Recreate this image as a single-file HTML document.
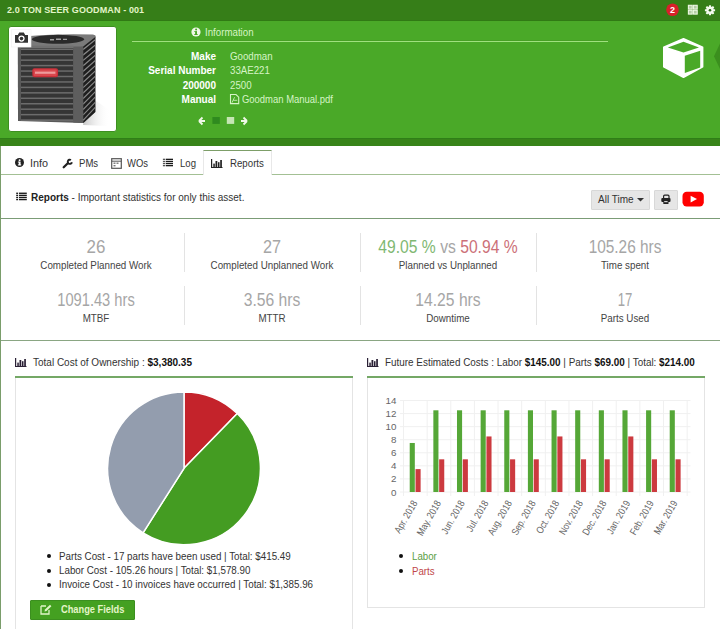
<!DOCTYPE html>
<html><head><meta charset="utf-8">
<style>
*{margin:0;padding:0;box-sizing:border-box}
html,body{width:720px;height:629px;overflow:hidden;background:#fff}
body{position:relative;font-family:"Liberation Sans", sans-serif;color:#333}
.a{position:absolute;white-space:nowrap}
svg.a{overflow:visible}
</style></head><body>
<div class="a" style="left:0px;top:0px;width:720px;height:21px;background:#367e18"></div>
<div class="a" style="left:0px;top:20px;width:720px;height:1px;background:#307a14"></div>
<div class="a" style="left:0px;top:21px;width:720px;height:117px;background:#4aa928"></div>
<div class="a" style="left:0px;top:138px;width:720px;height:8px;background:#388419"></div>
<div class="a" style="left:0px;top:138px;width:720px;height:1px;background:#2f7f18"></div>
<div class="a" style="left:0px;top:146px;width:1px;height:483px;background:#7a9d6b"></div>
<div class="a" style="left:7px;top:6.35px;font-size:9px;color:#e4f5c8;font-weight:bold;line-height:1;letter-spacing:0.11px">2.0 TON SEER GOODMAN - 001</div>
<svg class="a" style="left:660px;top:0px" width="60" height="21" viewBox="0 0 60 21">
  <circle cx="12.5" cy="9.8" r="6.3" fill="#d8202a"/>
  <text x="12.5" y="13.2" font-family="Liberation Sans" font-size="9" font-weight="bold" fill="#fff" text-anchor="middle">2</text>
<g fill="#b5cca5" stroke="#eef8e4" stroke-width="1.1"><rect x="28.4" y="5.3" width="3.8" height="3.8"/><rect x="33.4" y="5.3" width="3.8" height="3.8"/><rect x="28.4" y="10.3" width="3.8" height="3.8"/><rect x="33.4" y="10.3" width="3.8" height="3.8"/></g>
<g transform="translate(50,10.25)" fill="#f4fbee"><circle cx="0" cy="0" r="3.7"/><rect x="-1.05" y="-5.1" width="2.1" height="2.6" rx="0.4" transform="rotate(0)"/><rect x="-1.05" y="-5.1" width="2.1" height="2.6" rx="0.4" transform="rotate(45)"/><rect x="-1.05" y="-5.1" width="2.1" height="2.6" rx="0.4" transform="rotate(90)"/><rect x="-1.05" y="-5.1" width="2.1" height="2.6" rx="0.4" transform="rotate(135)"/><rect x="-1.05" y="-5.1" width="2.1" height="2.6" rx="0.4" transform="rotate(180)"/><rect x="-1.05" y="-5.1" width="2.1" height="2.6" rx="0.4" transform="rotate(225)"/><rect x="-1.05" y="-5.1" width="2.1" height="2.6" rx="0.4" transform="rotate(270)"/><rect x="-1.05" y="-5.1" width="2.1" height="2.6" rx="0.4" transform="rotate(315)"/><circle cx="0" cy="0" r="1.3" fill="#2e6a18"/></g></svg>
<div class="a" style="left:8px;top:26px;width:109px;height:106px;background:#fff;border:1px solid #3d8f20;border-radius:3px;overflow:hidden"><svg width="107" height="104" viewBox="1 1 107 104" style="position:absolute;left:0;top:0">
<defs><linearGradient id="sh" x1="0" y1="0" x2="1" y2="0"><stop offset="0" stop-color="#999" stop-opacity="0.55"/><stop offset="1" stop-color="#fff" stop-opacity="0"/></linearGradient></defs>
<path d="M80,70 L102,84 L100,100 L75,99 Z" fill="url(#sh)"/>
<path d="M9.8,21 L22,10.5 L87.3,9.5 L87.3,86 L75.3,97 L10,95 Z" fill="#5a5a5a"/>
<path d="M10,22 L22,10 Q50,7.5 85,8.5 Q88,9 87.5,11.5 L76,20.5 L65.3,22 Z" fill="#7a7a7a"/><rect x="10" y="19.6" width="55.3" height="2.6" fill="#707070"/>
<ellipse cx="50" cy="13.3" rx="26" ry="4.5" fill="#2a2a2a"/>
<path d="M42,13 h4 v1.4 h-4 z M48,12.4 h5 v1.6 h-5 z M55,12.8 h4 v1.3 h-4 z" fill="#a0a0a0"/>
<rect x="13" y="22" width="52.3" height="72" fill="#353535"/>
<rect x="13" y="22.50" width="52.3" height="1.5" fill="#6c6c6c"/><rect x="13" y="27.95" width="52.3" height="1.5" fill="#6c6c6c"/><rect x="13" y="33.40" width="52.3" height="1.5" fill="#6c6c6c"/><rect x="13" y="38.85" width="52.3" height="1.5" fill="#6c6c6c"/><rect x="13" y="44.30" width="52.3" height="1.5" fill="#6c6c6c"/><rect x="13" y="49.75" width="52.3" height="1.5" fill="#6c6c6c"/><rect x="13" y="55.20" width="52.3" height="1.5" fill="#6c6c6c"/><rect x="13" y="60.65" width="52.3" height="1.5" fill="#6c6c6c"/><rect x="13" y="66.10" width="52.3" height="1.5" fill="#6c6c6c"/><rect x="13" y="71.55" width="52.3" height="1.5" fill="#6c6c6c"/><rect x="13" y="77.00" width="52.3" height="1.5" fill="#6c6c6c"/><rect x="13" y="82.45" width="52.3" height="1.5" fill="#6c6c6c"/><rect x="13" y="87.90" width="52.3" height="1.5" fill="#6c6c6c"/><rect x="13" y="93.35" width="52.3" height="1.5" fill="#6c6c6c"/>
<path d="M65.3,20.5 L75.3,20.5 L75.3,97 L65.3,96.5 Z" fill="#5e5e5e"/>
<path d="M75.3,20.5 L87.3,11 L87.3,86 L75.3,97 Z" fill="#1e1e1e"/>
<path d="M75.3,22.50 L87.3,13.00 L87.3,14.50 L75.3,24.20 Z" fill="#8a8a8a"/><path d="M75.3,27.95 L87.3,18.20 L87.3,19.70 L75.3,29.65 Z" fill="#8a8a8a"/><path d="M75.3,33.40 L87.3,23.40 L87.3,24.90 L75.3,35.10 Z" fill="#8a8a8a"/><path d="M75.3,38.85 L87.3,28.60 L87.3,30.10 L75.3,40.55 Z" fill="#8a8a8a"/><path d="M75.3,44.30 L87.3,33.80 L87.3,35.30 L75.3,46.00 Z" fill="#8a8a8a"/><path d="M75.3,49.75 L87.3,39.00 L87.3,40.50 L75.3,51.45 Z" fill="#8a8a8a"/><path d="M75.3,55.20 L87.3,44.20 L87.3,45.70 L75.3,56.90 Z" fill="#8a8a8a"/><path d="M75.3,60.65 L87.3,49.40 L87.3,50.90 L75.3,62.35 Z" fill="#8a8a8a"/><path d="M75.3,66.10 L87.3,54.60 L87.3,56.10 L75.3,67.80 Z" fill="#8a8a8a"/><path d="M75.3,71.55 L87.3,59.80 L87.3,61.30 L75.3,73.25 Z" fill="#8a8a8a"/><path d="M75.3,77.00 L87.3,65.00 L87.3,66.50 L75.3,78.70 Z" fill="#8a8a8a"/><path d="M75.3,82.45 L87.3,70.20 L87.3,71.70 L75.3,84.15 Z" fill="#8a8a8a"/><path d="M75.3,87.90 L87.3,75.40 L87.3,76.90 L75.3,89.60 Z" fill="#8a8a8a"/><path d="M75.3,93.35 L87.3,80.60 L87.3,82.10 L75.3,95.05 Z" fill="#8a8a8a"/>
<rect x="24.3" y="42.2" width="25.8" height="9.1" rx="2.2" fill="#c8303a"/>
<rect x="25.6" y="43.5" width="23.2" height="6.5" rx="1.2" fill="#d9474d"/>
<rect x="27" y="45.6" width="20.4" height="2.2" fill="#f3b0b0" opacity="0.8"/>
<rect x="3.4" y="3.7" width="19.6" height="17.3" fill="#fff" stroke="#f0f0f0" stroke-width="0.6"/>
<path d="M7,9 h2.8 l1.4,-2.6 h4.6 l1.4,2.6 h2.8 v7.7 h-13 z" fill="#333"/>
<circle cx="13.5" cy="12.6" r="3.1" fill="#fff"/><circle cx="13.5" cy="12.6" r="1.8" fill="#333"/>
</svg></div>
<svg class="a" style="left:191px;top:27.4px" width="10" height="10" viewBox="0 0 10 10"><circle cx="5" cy="5" r="4.6" fill="#f0f8e8"/><rect x="4.1" y="4.1" width="1.9" height="3.7" fill="#4aa928"/><rect x="3.3" y="7" width="3.4" height="1" fill="#4aa928"/><rect x="3.3" y="4.1" width="1.2" height="0.9" fill="#4aa928"/><circle cx="5.1" cy="2.6" r="1.0" fill="#4aa928"/></svg>
<div class="a" style="left:205px;top:27.60px;font-size:10px;color:#d6f4c6;font-weight:normal;line-height:1;transform:scaleX(0.97);transform-origin:left top;">Information</div>
<div class="a" style="left:132px;top:40px;width:476px;height:1px;background:#47a025"></div>
<div class="a" style="left:132px;top:41px;width:476px;height:1px;background:#9fe07f"></div>
<div class="a" style="left:-384px;width:600px;text-align:right;top:51.80px;font-size:10px;color:#fff;font-weight:bold;line-height:1;">Make</div>
<div class="a" style="left:230px;top:51.80px;font-size:10px;color:#d6f4c6;font-weight:normal;line-height:1;transform:scaleX(0.97);transform-origin:left top;">Goodman</div>
<div class="a" style="left:-384px;width:600px;text-align:right;top:66.20px;font-size:10px;color:#fff;font-weight:bold;line-height:1;">Serial Number</div>
<div class="a" style="left:230px;top:66.20px;font-size:10px;color:#d6f4c6;font-weight:normal;line-height:1;transform:scaleX(0.97);transform-origin:left top;">33AE221</div>
<div class="a" style="left:-384px;width:600px;text-align:right;top:80.50px;font-size:10px;color:#fff;font-weight:bold;line-height:1;">200000</div>
<div class="a" style="left:230px;top:80.50px;font-size:10px;color:#d6f4c6;font-weight:normal;line-height:1;transform:scaleX(0.97);transform-origin:left top;">2500</div>
<div class="a" style="left:-384px;width:600px;text-align:right;top:94.90px;font-size:10px;color:#fff;font-weight:bold;line-height:1;">Manual</div>
<svg class="a" style="left:226px;top:92px" width="16" height="14" viewBox="226 92 16 14"><path d="M230.5,94.5 H236 L238.7,97.2 V103.6 H230.5 Z" fill="none" stroke="#d6f4c6" stroke-width="1.1"/><path d="M232,102.6 L234.6,97.2 M233.3,100.3 H237.2" stroke="#d6f4c6" stroke-width="0.8" fill="none"/></svg>
<div class="a" style="left:242px;top:94.90px;font-size:10px;color:#d6f4c6;font-weight:normal;line-height:1;transform:scaleX(0.945);transform-origin:left top;">Goodman Manual.pdf</div>
<svg class="a" style="left:197px;top:115px" width="54" height="12" viewBox="0 0 54 12"><path d="M2,6 L5.5,2.5 M2,6 L5.5,9.5 M2,6 H8" stroke="#f0f8e8" stroke-width="1.8" fill="none"/><rect x="15.4" y="2" width="7.4" height="6.9" fill="#2f8a1f"/><rect x="29.8" y="2" width="7.4" height="6.9" fill="#c6e6b4"/><path d="M50,6 L46.5,2.5 M50,6 L46.5,9.5 M50,6 H44" stroke="#f0f8e8" stroke-width="1.8" fill="none"/></svg>
<svg class="a" style="left:660px;top:35px" width="48" height="46" viewBox="660 35 48 46"><path d="M683.5,38.8 L702.6,47.3 L702.6,66.8 L683.5,77.2 L663.8,66.8 L663.8,47.3 Z" fill="#fff" stroke="#fff" stroke-width="1.6" stroke-linejoin="round"/><path d="M683.5,41.8 L667.8,47.4 L683.5,52.6 L699,47.4 Z M684.8,55.8 L700.2,50.8 L700.2,67.6 L684.8,72.9 Z" fill="#4aa928"/></svg>
<svg class="a" style="left:712px;top:42px" width="8" height="28" viewBox="712 42 8 28"><path d="M720,43.5 L714,56.3 L720,69 Z" fill="#3b8f1e"/></svg>
<div class="a" style="left:1px;top:174px;width:719px;height:1px;background:#a3c094"></div>
<div class="a" style="left:203px;top:150px;width:69px;height:25px;background:#fff;border:1px solid #ddd;border-left-color:#e8e8e8;border-right-color:#e8e8e8;border-top:1px solid #7d9e68;border-bottom:none"></div>
<svg class="a" style="left:15px;top:158.2px" width="9" height="9" viewBox="0 0 9 9"><circle cx="4.5" cy="4.5" r="4.5" fill="#222"/><rect x="3.7" y="3.6" width="1.9" height="3.6" fill="#fff"/><rect x="2.9" y="6.4" width="3.3" height="1" fill="#fff"/><rect x="2.9" y="3.6" width="1.2" height="0.9" fill="#fff"/><circle cx="4.6" cy="2.2" r="1.0" fill="#fff"/></svg>
<div class="a" style="left:30px;top:158.05px;font-size:11px;color:#333;font-weight:normal;line-height:1;transform:scaleX(0.98);transform-origin:left top;">Info</div>
<svg class="a" style="left:58px;top:154px" width="20" height="18" viewBox="58 154 20 18"><line x1="63.7" y1="167.3" x2="67.8" y2="163.2" stroke="#222" stroke-width="2.3" stroke-linecap="round"/><path d="M71.9,162.3 A2.1,2.1 0 1,1 70.95,160.0" stroke="#222" stroke-width="1.9" fill="none"/></svg>
<div class="a" style="left:79px;top:158.05px;font-size:11px;color:#333;font-weight:normal;line-height:1;transform:scaleX(0.87);transform-origin:left top;">PMs</div>
<svg class="a" style="left:111px;top:158px" width="11" height="11" viewBox="0 0 11 11"><rect x="0.7" y="0.7" width="9.6" height="9.6" fill="none" stroke="#555" stroke-width="1.2"/><line x1="0.7" y1="3.2" x2="10.3" y2="3.2" stroke="#555" stroke-width="1"/><rect x="2.5" y="4.5" width="2" height="1.4" fill="#777"/><rect x="5.5" y="4.5" width="2" height="1.4" fill="#777"/><rect x="2.5" y="7" width="2" height="1.4" fill="#777"/></svg>
<div class="a" style="left:127px;top:158.05px;font-size:11px;color:#333;font-weight:normal;line-height:1;transform:scaleX(0.86);transform-origin:left top;">WOs</div>
<svg class="a" style="left:158px;top:154px" width="20" height="18" viewBox="158 154 20 18"><rect x="162.9" y="158.70" width="2.5" height="1.3" fill="#555"/><rect x="166" y="158.70" width="7" height="1.3" fill="#1a1a1a"/><rect x="162.9" y="160.80" width="2.5" height="1.3" fill="#555"/><rect x="166" y="160.80" width="7" height="1.3" fill="#1a1a1a"/><rect x="162.9" y="162.90" width="2.5" height="1.3" fill="#555"/><rect x="166" y="162.90" width="7" height="1.3" fill="#1a1a1a"/><rect x="162.9" y="165.00" width="2.5" height="1.3" fill="#555"/><rect x="166" y="165.00" width="7" height="1.3" fill="#1a1a1a"/></svg>
<div class="a" style="left:180px;top:158.05px;font-size:11px;color:#333;font-weight:normal;line-height:1;transform:scaleX(0.87);transform-origin:left top;">Log</div>
<svg class="a" style="left:211px;top:159px" width="12" height="9" viewBox="0 0 12 9"><g fill="#222"><rect x="0" y="0" width="1.2" height="9"/><rect x="0" y="8" width="11.5" height="1"/><rect x="2.3" y="4.6" width="1.5" height="3.4"/><rect x="4.5" y="2" width="1.8" height="6"/><rect x="7" y="3.2" width="1.5" height="4.8"/><rect x="9.2" y="1" width="1.7" height="7"/></g></svg>
<div class="a" style="left:230px;top:158.05px;font-size:11px;color:#333;font-weight:normal;line-height:1;transform:scaleX(0.88);transform-origin:left top;">Reports</div>
<svg class="a" style="left:12px;top:186px" width="20" height="20" viewBox="12 186 20 20"><g fill="#1a1a1a"><rect x="16.2" y="192.60" width="1.9" height="1.35"/><rect x="19" y="192.60" width="7.8" height="1.35"/><rect x="16.2" y="194.70" width="1.9" height="1.35"/><rect x="19" y="194.70" width="7.8" height="1.35"/><rect x="16.2" y="196.80" width="1.9" height="1.35"/><rect x="19" y="196.80" width="7.8" height="1.35"/><rect x="16.2" y="198.90" width="1.9" height="1.35"/><rect x="19" y="198.90" width="7.8" height="1.35"/></g></svg>
<div class="a" style="left:31px;top:193.00px;font-size:10px;color:#333;font-weight:normal;line-height:1;"><b style="color:#222">Reports</b> - Important statistics for only this asset.</div>
<div class="a" style="left:591px;top:190px;width:59px;height:20px;background:#e6e6e6;border:1px solid #d8d8d8;border-radius:1px"></div>
<div class="a" style="left:598px;top:194.80px;font-size:10px;color:#333;font-weight:normal;line-height:1;">All Time</div>
<svg class="a" style="left:637px;top:198px" width="7" height="4" viewBox="0 0 7 4"><path d="M0,0 L7,0 L3.5,3.6 Z" fill="#333"/></svg>
<div class="a" style="left:654px;top:190px;width:24px;height:20px;background:#e6e6e6;border:1px solid #d8d8d8;border-radius:1px"></div>
<svg class="a" style="left:650px;top:186px" width="60" height="26" viewBox="650 186 60 26"><path d="M663.6,198 v-1.8 q0,-1 1,-1 h3.4 q1,0 1,1 v1.8" stroke="#222" stroke-width="1.2" fill="none"/><rect x="661.3" y="198" width="9.2" height="4" rx="1" fill="#222"/><rect x="663.3" y="200.4" width="5.2" height="3.5" rx="0.5" fill="#222"/><rect x="664.2" y="201.1" width="3.4" height="1.1" fill="#e6e6e6"/></svg>
<svg class="a" style="left:680px;top:190px" width="26" height="18" viewBox="680 190 26 18"><rect x="682.5" y="191.8" width="21.3" height="14.6" rx="4.2" fill="#f00"/><path d="M690.6,195.8 L697,199.1 L690.6,202.4 Z" fill="#fff"/></svg>
<div class="a" style="left:1px;top:218px;width:719px;height:1px;background:#7b9c76"></div>
<div class="a" style="left:184px;top:233px;width:1px;height:39px;background:#e3e3e3"></div>
<div class="a" style="left:184px;top:286px;width:1px;height:39px;background:#e3e3e3"></div>
<div class="a" style="left:360px;top:233px;width:1px;height:39px;background:#e3e3e3"></div>
<div class="a" style="left:360px;top:286px;width:1px;height:39px;background:#e3e3e3"></div>
<div class="a" style="left:536px;top:233px;width:1px;height:39px;background:#e3e3e3"></div>
<div class="a" style="left:536px;top:286px;width:1px;height:39px;background:#e3e3e3"></div>
<div class="a" style="left:-204.2px;width:600px;text-align:center;top:237.80px;font-size:18px;color:#a6a6a6;font-weight:normal;line-height:1;transform:scaleX(0.94);transform-origin:center top;">26</div>
<div class="a" style="left:-204.2px;width:600px;text-align:center;top:259.55px;font-size:11px;color:#444;font-weight:normal;line-height:1;transform:scaleX(0.89);transform-origin:center top;">Completed Planned Work</div>
<div class="a" style="left:-28px;width:600px;text-align:center;top:237.80px;font-size:18px;color:#a6a6a6;font-weight:normal;line-height:1;transform:scaleX(0.9);transform-origin:center top;">27</div>
<div class="a" style="left:-28px;width:600px;text-align:center;top:259.55px;font-size:11px;color:#444;font-weight:normal;line-height:1;transform:scaleX(0.89);transform-origin:center top;">Completed Unplanned Work</div>
<div class="a" style="left:147.8px;width:600px;text-align:center;top:237.80px;font-size:18px;color:#a6a6a6;font-weight:normal;line-height:1;transform:scaleX(0.87);transform-origin:center top;"><span style="color:#80b872">49.05 %</span> vs <span style="color:#cc7078">50.94 %</span></div>
<div class="a" style="left:147.8px;width:600px;text-align:center;top:259.55px;font-size:11px;color:#444;font-weight:normal;line-height:1;transform:scaleX(0.89);transform-origin:center top;">Planned vs Unplanned</div>
<div class="a" style="left:324.6px;width:600px;text-align:center;top:237.80px;font-size:18px;color:#a6a6a6;font-weight:normal;line-height:1;transform:scaleX(0.855);transform-origin:center top;">105.26 hrs</div>
<div class="a" style="left:324.6px;width:600px;text-align:center;top:259.55px;font-size:11px;color:#444;font-weight:normal;line-height:1;transform:scaleX(0.89);transform-origin:center top;">Time spent</div>
<div class="a" style="left:-204.2px;width:600px;text-align:center;top:291.00px;font-size:18px;color:#a6a6a6;font-weight:normal;line-height:1;transform:scaleX(0.815);transform-origin:center top;">1091.43 hrs</div>
<div class="a" style="left:-204.2px;width:600px;text-align:center;top:312.75px;font-size:11px;color:#444;font-weight:normal;line-height:1;transform:scaleX(0.89);transform-origin:center top;">MTBF</div>
<div class="a" style="left:-28px;width:600px;text-align:center;top:291.00px;font-size:18px;color:#a6a6a6;font-weight:normal;line-height:1;transform:scaleX(0.87);transform-origin:center top;">3.56 hrs</div>
<div class="a" style="left:-28px;width:600px;text-align:center;top:312.75px;font-size:11px;color:#444;font-weight:normal;line-height:1;transform:scaleX(0.89);transform-origin:center top;">MTTR</div>
<div class="a" style="left:147.8px;width:600px;text-align:center;top:291.00px;font-size:18px;color:#a6a6a6;font-weight:normal;line-height:1;transform:scaleX(0.87);transform-origin:center top;">14.25 hrs</div>
<div class="a" style="left:147.8px;width:600px;text-align:center;top:312.75px;font-size:11px;color:#444;font-weight:normal;line-height:1;transform:scaleX(0.89);transform-origin:center top;">Downtime</div>
<div class="a" style="left:324.6px;width:600px;text-align:center;top:291.00px;font-size:18px;color:#a6a6a6;font-weight:normal;line-height:1;transform:scaleX(0.73);transform-origin:center top;">17</div>
<div class="a" style="left:324.6px;width:600px;text-align:center;top:312.75px;font-size:11px;color:#444;font-weight:normal;line-height:1;transform:scaleX(0.89);transform-origin:center top;">Parts Used</div>
<div class="a" style="left:1px;top:340px;width:719px;height:1px;background:#8aa683"></div>
<svg class="a" style="left:15px;top:358px" width="12" height="9" viewBox="0 0 12 9"><g fill="#2a2035"><rect x="0" y="0" width="1.2" height="9"/><rect x="0" y="8" width="11.5" height="1"/><rect x="2.3" y="4.6" width="1.5" height="3.4"/><rect x="4.5" y="2" width="1.8" height="6"/><rect x="7" y="3.2" width="1.5" height="4.8"/><rect x="9.2" y="1" width="1.7" height="7"/></g></svg>
<div class="a" style="left:33px;top:357.80px;font-size:10px;color:#333;font-weight:normal;line-height:1;">Total Cost of Ownership : <b style="color:#111">$3,380.35</b></div>
<div class="a" style="left:15px;top:376px;width:338px;height:2px;background:#74a866"></div>
<div class="a" style="left:15px;top:378px;width:338px;height:260px;border:1px solid #e4e4e4;border-top:none"></div>
<svg class="a" style="left:0px;top:0px" width="720" height="629" viewBox="0 0 720 629"><path d="M184.0,468.3 L184.00,391.90 A76.4,76.4 0 0,1 237.31,413.57 Z" fill="#c4232b" stroke="#fff" stroke-width="1.5" stroke-linejoin="round"/><path d="M184.0,468.3 L237.31,413.57 A76.4,76.4 0 0,1 143.06,532.81 Z" fill="#449c22" stroke="#fff" stroke-width="1.5" stroke-linejoin="round"/><path d="M184.0,468.3 L143.06,532.81 A76.4,76.4 0 0,1 184.00,391.90 Z" fill="#939dae" stroke="#fff" stroke-width="1.5" stroke-linejoin="round"/></svg>
<div class="a" style="left:59px;top:551.60px;font-size:10px;color:#333;font-weight:normal;line-height:1;transform:scaleX(0.98);transform-origin:left top;">Parts Cost - 17 parts have been used | Total: $415.49</div>
<div class="a" style="left:47px;top:554.3px;width:4px;height:4px;border-radius:50%;background:#111"></div>
<div class="a" style="left:59px;top:566.15px;font-size:10px;color:#333;font-weight:normal;line-height:1;transform:scaleX(0.98);transform-origin:left top;">Labor Cost - 105.26 hours | Total: $1,578.90</div>
<div class="a" style="left:47px;top:568.5px;width:4px;height:4px;border-radius:50%;background:#111"></div>
<div class="a" style="left:59px;top:580.30px;font-size:10px;color:#333;font-weight:normal;line-height:1;transform:scaleX(0.98);transform-origin:left top;">Invoice Cost - 10 invoices have occurred | Total: $1,385.96</div>
<div class="a" style="left:47px;top:582.8px;width:4px;height:4px;border-radius:50%;background:#111"></div>
<div class="a" style="left:30px;top:600px;width:105px;height:20px;background:#44a021;border:1px solid #3b8f1f;border-radius:1px"></div>
<svg class="a" style="left:40px;top:604px" width="12" height="11" viewBox="0 0 12 11"><path d="M1,2 h5 M1,2 v8 h8 v-4" fill="none" stroke="#dff5c8" stroke-width="1.3"/><path d="M4.5,7.5 L5,5.5 L10,0.8 L11.4,2.2 L6.5,7 Z" fill="#dff5c8"/></svg>
<div class="a" style="left:61px;top:604.48px;font-size:10.5px;color:#e4f5c8;font-weight:bold;line-height:1;transform:scaleX(0.884);transform-origin:left top;">Change Fields</div>
<svg class="a" style="left:367px;top:358px" width="12" height="9" viewBox="0 0 12 9"><g fill="#2a2035"><rect x="0" y="0" width="1.2" height="9"/><rect x="0" y="8" width="11.5" height="1"/><rect x="2.3" y="4.6" width="1.5" height="3.4"/><rect x="4.5" y="2" width="1.8" height="6"/><rect x="7" y="3.2" width="1.5" height="4.8"/><rect x="9.2" y="1" width="1.7" height="7"/></g></svg>
<div class="a" style="left:385px;top:357.80px;font-size:10px;color:#333;font-weight:normal;line-height:1;transform:scaleX(0.99);transform-origin:left top;">Future Estimated Costs : Labor <b style="color:#111">$145.00</b> | Parts <b style="color:#111">$69.00</b> | Total: <b style="color:#111">$214.00</b></div>
<div class="a" style="left:367px;top:376px;width:338px;height:2px;background:#74a866"></div>
<div class="a" style="left:367px;top:378px;width:338px;height:230px;border:1px solid #e4e4e4;border-top:none"></div>
<svg class="a" style="left:0px;top:0px" width="720" height="629" viewBox="0 0 720 629"><line x1="400" y1="492.00" x2="690.5" y2="492.00" stroke="#f0f0f0" stroke-width="1"/><text x="396.5" y="495.50" font-size="9.8" fill="#666" text-anchor="end" font-family="Liberation Sans">0</text><line x1="400" y1="478.93" x2="690.5" y2="478.93" stroke="#f0f0f0" stroke-width="1"/><text x="396.5" y="482.43" font-size="9.8" fill="#666" text-anchor="end" font-family="Liberation Sans">2</text><line x1="400" y1="465.86" x2="690.5" y2="465.86" stroke="#f0f0f0" stroke-width="1"/><text x="396.5" y="469.36" font-size="9.8" fill="#666" text-anchor="end" font-family="Liberation Sans">4</text><line x1="400" y1="452.79" x2="690.5" y2="452.79" stroke="#f0f0f0" stroke-width="1"/><text x="396.5" y="456.29" font-size="9.8" fill="#666" text-anchor="end" font-family="Liberation Sans">6</text><line x1="400" y1="439.71" x2="690.5" y2="439.71" stroke="#f0f0f0" stroke-width="1"/><text x="396.5" y="443.21" font-size="9.8" fill="#666" text-anchor="end" font-family="Liberation Sans">8</text><line x1="400" y1="426.64" x2="690.5" y2="426.64" stroke="#f0f0f0" stroke-width="1"/><text x="396.5" y="430.14" font-size="9.8" fill="#666" text-anchor="end" font-family="Liberation Sans">10</text><line x1="400" y1="413.57" x2="690.5" y2="413.57" stroke="#f0f0f0" stroke-width="1"/><text x="396.5" y="417.07" font-size="9.8" fill="#666" text-anchor="end" font-family="Liberation Sans">12</text><line x1="400" y1="400.50" x2="690.5" y2="400.50" stroke="#f0f0f0" stroke-width="1"/><text x="396.5" y="404.00" font-size="9.8" fill="#666" text-anchor="end" font-family="Liberation Sans">14</text><line x1="403.50" y1="400.5" x2="403.50" y2="496" stroke="#f0f0f0" stroke-width="1"/><line x1="427.14" y1="400.5" x2="427.14" y2="496" stroke="#f0f0f0" stroke-width="1"/><line x1="450.77" y1="400.5" x2="450.77" y2="496" stroke="#f0f0f0" stroke-width="1"/><line x1="474.41" y1="400.5" x2="474.41" y2="496" stroke="#f0f0f0" stroke-width="1"/><line x1="498.05" y1="400.5" x2="498.05" y2="496" stroke="#f0f0f0" stroke-width="1"/><line x1="521.68" y1="400.5" x2="521.68" y2="496" stroke="#f0f0f0" stroke-width="1"/><line x1="545.32" y1="400.5" x2="545.32" y2="496" stroke="#f0f0f0" stroke-width="1"/><line x1="568.95" y1="400.5" x2="568.95" y2="496" stroke="#f0f0f0" stroke-width="1"/><line x1="592.59" y1="400.5" x2="592.59" y2="496" stroke="#f0f0f0" stroke-width="1"/><line x1="616.23" y1="400.5" x2="616.23" y2="496" stroke="#f0f0f0" stroke-width="1"/><line x1="639.86" y1="400.5" x2="639.86" y2="496" stroke="#f0f0f0" stroke-width="1"/><line x1="663.50" y1="400.5" x2="663.50" y2="496" stroke="#f0f0f0" stroke-width="1"/><line x1="687.14" y1="400.5" x2="687.14" y2="496" stroke="#f0f0f0" stroke-width="1"/><rect x="409.72" y="442.98" width="5.1" height="49.02" fill="#55a737"/><rect x="415.52" y="469.12" width="5.1" height="22.88" fill="#cc3a3f"/><text transform="translate(417.82,503) rotate(-60) scale(0.84,1)" font-size="10" fill="#666" text-anchor="end" font-family="Liberation Sans">Apr. 2018</text><rect x="433.35" y="410.30" width="5.1" height="81.70" fill="#55a737"/><rect x="439.15" y="459.32" width="5.1" height="32.68" fill="#cc3a3f"/><text transform="translate(441.45,503) rotate(-60) scale(0.84,1)" font-size="10" fill="#666" text-anchor="end" font-family="Liberation Sans">May. 2018</text><rect x="456.99" y="410.30" width="5.1" height="81.70" fill="#55a737"/><rect x="462.79" y="459.32" width="5.1" height="32.68" fill="#cc3a3f"/><text transform="translate(465.09,503) rotate(-60) scale(0.84,1)" font-size="10" fill="#666" text-anchor="end" font-family="Liberation Sans">Jun. 2018</text><rect x="480.63" y="410.30" width="5.1" height="81.70" fill="#55a737"/><rect x="486.43" y="436.45" width="5.1" height="55.55" fill="#cc3a3f"/><text transform="translate(488.73,503) rotate(-60) scale(0.84,1)" font-size="10" fill="#666" text-anchor="end" font-family="Liberation Sans">Jul. 2018</text><rect x="504.26" y="410.30" width="5.1" height="81.70" fill="#55a737"/><rect x="510.06" y="459.32" width="5.1" height="32.68" fill="#cc3a3f"/><text transform="translate(512.36,503) rotate(-60) scale(0.84,1)" font-size="10" fill="#666" text-anchor="end" font-family="Liberation Sans">Aug. 2018</text><rect x="527.90" y="410.30" width="5.1" height="81.70" fill="#55a737"/><rect x="533.70" y="459.32" width="5.1" height="32.68" fill="#cc3a3f"/><text transform="translate(536.00,503) rotate(-60) scale(0.84,1)" font-size="10" fill="#666" text-anchor="end" font-family="Liberation Sans">Sep. 2018</text><rect x="551.54" y="410.30" width="5.1" height="81.70" fill="#55a737"/><rect x="557.34" y="436.45" width="5.1" height="55.55" fill="#cc3a3f"/><text transform="translate(559.64,503) rotate(-60) scale(0.84,1)" font-size="10" fill="#666" text-anchor="end" font-family="Liberation Sans">Oct. 2018</text><rect x="575.17" y="410.30" width="5.1" height="81.70" fill="#55a737"/><rect x="580.97" y="459.32" width="5.1" height="32.68" fill="#cc3a3f"/><text transform="translate(583.27,503) rotate(-60) scale(0.84,1)" font-size="10" fill="#666" text-anchor="end" font-family="Liberation Sans">Nov. 2018</text><rect x="598.81" y="410.30" width="5.1" height="81.70" fill="#55a737"/><rect x="604.61" y="459.32" width="5.1" height="32.68" fill="#cc3a3f"/><text transform="translate(606.91,503) rotate(-60) scale(0.84,1)" font-size="10" fill="#666" text-anchor="end" font-family="Liberation Sans">Dec. 2018</text><rect x="622.45" y="410.30" width="5.1" height="81.70" fill="#55a737"/><rect x="628.25" y="436.45" width="5.1" height="55.55" fill="#cc3a3f"/><text transform="translate(630.55,503) rotate(-60) scale(0.84,1)" font-size="10" fill="#666" text-anchor="end" font-family="Liberation Sans">Jan. 2019</text><rect x="646.08" y="410.30" width="5.1" height="81.70" fill="#55a737"/><rect x="651.88" y="459.32" width="5.1" height="32.68" fill="#cc3a3f"/><text transform="translate(654.18,503) rotate(-60) scale(0.84,1)" font-size="10" fill="#666" text-anchor="end" font-family="Liberation Sans">Feb. 2019</text><rect x="669.72" y="410.30" width="5.1" height="81.70" fill="#55a737"/><rect x="675.52" y="459.32" width="5.1" height="32.68" fill="#cc3a3f"/><text transform="translate(677.82,503) rotate(-60) scale(0.84,1)" font-size="10" fill="#666" text-anchor="end" font-family="Liberation Sans">Mar. 2019</text></svg>
<div class="a" style="left:399px;top:554.4px;width:4px;height:4px;border-radius:50%;background:#111"></div>
<div class="a" style="left:399px;top:568.8px;width:4px;height:4px;border-radius:50%;background:#111"></div>
<div class="a" style="left:412px;top:552.20px;font-size:10px;color:#5a9e45;font-weight:normal;line-height:1;transform:scaleX(0.97);transform-origin:left top;">Labor</div>
<div class="a" style="left:412px;top:566.80px;font-size:10px;color:#c0474a;font-weight:normal;line-height:1;transform:scaleX(0.97);transform-origin:left top;">Parts</div>
</body></html>
